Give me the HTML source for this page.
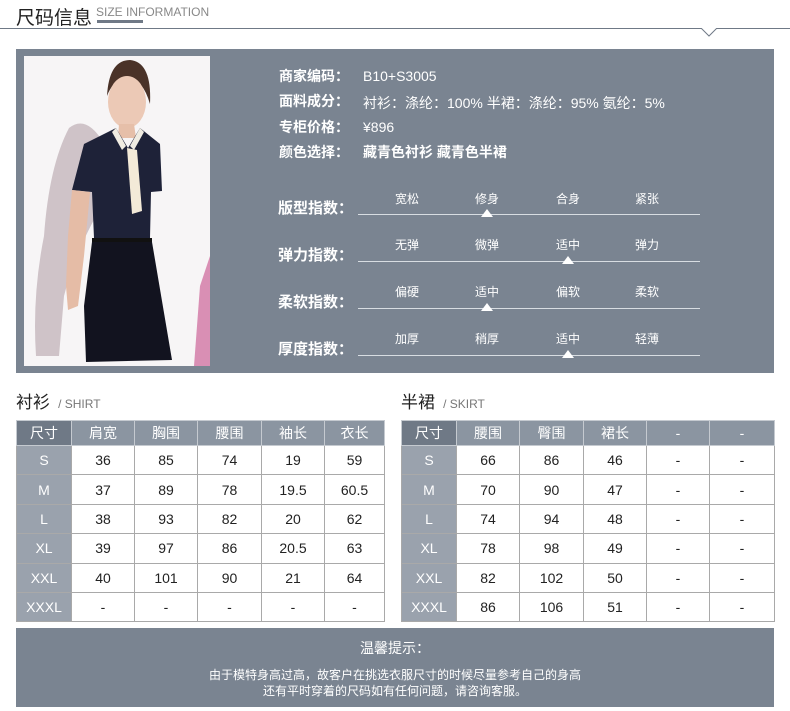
<!DOCTYPE html>
<html><head><meta charset="utf-8"><style>
*{margin:0;padding:0;box-sizing:border-box}
body{width:790px;height:711px;background:#fff;position:relative;overflow:hidden;font-family:"Liberation Sans","Noto Sans CJK SC",sans-serif}
.a{position:absolute;white-space:nowrap}
.panel{position:absolute;left:16px;top:49px;width:758px;height:324px;background:#7a8491}
.info{color:#fff;font-size:14px}
.info b{font-weight:bold}
.info span{position:absolute;left:84px;top:2px}
.lab{color:#fff;font-size:15px;font-weight:bold}
.opt{color:#fff;font-size:12px;width:50px;text-align:center}
.ln{position:absolute;height:1px;background:#d8dde2;left:358px;width:342px}
.tri{position:absolute;width:0;height:0;border-left:6px solid transparent;border-right:6px solid transparent;border-bottom:8px solid #fff}
table{position:absolute;border-collapse:collapse;font-size:14px;table-layout:fixed}
td{border:1px solid #a9a9a9;text-align:center;height:29.4px;color:#222}
tr.h td{background:#8b95a1;color:#fff;height:25px;border-color:#c5cad0}
tr.h td:first-child{background:#6f7986}
td.s{background:#9aa2ad;color:#fff}
</style></head><body>
<div class="a" style="left:16px;top:3px;font-size:19px;color:#222">尺码信息</div>
<div class="a" style="left:96px;top:5px;font-size:12px;color:#888">SIZE INFORMATION</div>
<div class="a" style="left:97px;top:20px;width:46px;height:3px;background:#6f7986"></div>
<div class="a" style="left:0;top:28px;width:790px;height:1px;background:#6f7986"></div>
<svg class="a" style="left:700px;top:28px" width="18" height="10"><path d="M1 0 L9 8 L17 0" stroke="#6f7986" fill="#fff" stroke-width="1"/></svg>

<div class="panel"></div>
<svg class="a" style="left:24px;top:56px" width="186" height="310" viewBox="0 0 186 310">
<rect width="186" height="310" fill="#f7f5f6"/>
<polygon points="176,230 186,200 186,310 170,310" fill="#d98fb4"/>
<path d="M45 72 Q60 60 75 80 L72 160 Q50 200 40 240 L35 300 L12 300 Q8 240 20 180 Q25 110 45 72Z" fill="#cfc3c8"/>
<path d="M83 40 Q85 4 106 4 Q128 6 126 48 Q118 20 100 22 Q88 26 83 40Z" fill="#4a3228"/>
<ellipse cx="103" cy="46" rx="19" ry="26" fill="#ecc9b6"/>
<path d="M95 68 L110 68 L112 82 L94 82Z" fill="#e6bfa9"/>
<path d="M60 88 L92 72 L104 92 L116 72 L136 88 L138 135 L127 136 L126 182 L70 182 L68 136 L48 134Z" fill="#1e2238"/>
<path d="M92 72 L102 90 L98 94 L88 76Z M116 72 L106 90 L110 94 L120 76Z" fill="#f0ece2"/>
<path d="M103 92 L113 94 L118 155 L108 158Z" fill="#f3ead8"/>
<path d="M48 134 L66 136 L60 200 L54 250 L44 254 L42 230 L44 180Z" fill="#e5bca6"/>
<rect x="68" y="182" width="60" height="4" fill="#111"/>
<path d="M68 186 L128 186 L148 304 L62 306 L60 250Z" fill="#12131f"/>
</svg>

<div class="a info" style="left:279px;top:66px;width:400px"><b>商家编码：</b><span>B10+S3005</span></div>
<div class="a info" style="left:279px;top:91px;width:400px"><b>面料成分：</b><span>衬衫：涤纶：100% 半裙：涤纶：95% 氨纶：5%</span></div>
<div class="a info" style="left:279px;top:117px;width:400px"><b>专柜价格：</b><span>¥896</span></div>
<div class="a info" style="left:279px;top:142px;width:400px"><b>颜色选择：</b><span style="top:0"><b>藏青色衬衫 藏青色半裙</b></span></div>

<div class="a lab" style="left:278px;top:197px">版型指数：</div>
<div class="a opt" style="left:382px;top:190px">宽松</div><div class="a opt" style="left:462px;top:190px">修身</div><div class="a opt" style="left:543px;top:190px">合身</div><div class="a opt" style="left:622px;top:190px">紧张</div>
<div class="ln" style="top:214px"></div><div class="tri" style="left:481px;top:209px"></div>

<div class="a lab" style="left:278px;top:244px">弹力指数：</div>
<div class="a opt" style="left:382px;top:236px">无弹</div><div class="a opt" style="left:462px;top:236px">微弹</div><div class="a opt" style="left:543px;top:236px">适中</div><div class="a opt" style="left:622px;top:236px">弹力</div>
<div class="ln" style="top:261px"></div><div class="tri" style="left:562px;top:256px"></div>

<div class="a lab" style="left:278px;top:291px">柔软指数：</div>
<div class="a opt" style="left:382px;top:283px">偏硬</div><div class="a opt" style="left:462px;top:283px">适中</div><div class="a opt" style="left:543px;top:283px">偏软</div><div class="a opt" style="left:622px;top:283px">柔软</div>
<div class="ln" style="top:308px"></div><div class="tri" style="left:481px;top:303px"></div>

<div class="a lab" style="left:278px;top:338px">厚度指数：</div>
<div class="a opt" style="left:382px;top:330px">加厚</div><div class="a opt" style="left:462px;top:330px">稍厚</div><div class="a opt" style="left:543px;top:330px">适中</div><div class="a opt" style="left:622px;top:330px">轻薄</div>
<div class="ln" style="top:355px"></div><div class="tri" style="left:562px;top:350px"></div>

<div class="a" style="left:16px;top:388px;font-size:17px;color:#222">衬衫 <span style="font-size:12px;color:#777">&nbsp;/ SHIRT</span></div>
<div class="a" style="left:401px;top:388px;font-size:17px;color:#222">半裙 <span style="font-size:12px;color:#777">&nbsp;/ SKIRT</span></div>

<table style="left:16px;top:420px;width:368px">
<colgroup><col style="width:55px"><col style="width:63px"><col style="width:63px"><col style="width:64px"><col style="width:63px"><col style="width:60px"></colgroup>
<tr class="h"><td>尺寸</td><td>肩宽</td><td>胸围</td><td>腰围</td><td>袖长</td><td>衣长</td></tr>
<tr><td class="s">S</td><td>36</td><td>85</td><td>74</td><td>19</td><td>59</td></tr>
<tr><td class="s">M</td><td>37</td><td>89</td><td>78</td><td>19.5</td><td>60.5</td></tr>
<tr><td class="s">L</td><td>38</td><td>93</td><td>82</td><td>20</td><td>62</td></tr>
<tr><td class="s">XL</td><td>39</td><td>97</td><td>86</td><td>20.5</td><td>63</td></tr>
<tr><td class="s">XXL</td><td>40</td><td>101</td><td>90</td><td>21</td><td>64</td></tr>
<tr><td class="s">XXXL</td><td>-</td><td>-</td><td>-</td><td>-</td><td>-</td></tr>
</table>

<table style="left:401px;top:420px;width:373px">
<colgroup><col style="width:55px"><col style="width:63px"><col style="width:64px"><col style="width:63px"><col style="width:63px"><col style="width:65px"></colgroup>
<tr class="h"><td>尺寸</td><td>腰围</td><td>臀围</td><td>裙长</td><td>-</td><td>-</td></tr>
<tr><td class="s">S</td><td>66</td><td>86</td><td>46</td><td>-</td><td>-</td></tr>
<tr><td class="s">M</td><td>70</td><td>90</td><td>47</td><td>-</td><td>-</td></tr>
<tr><td class="s">L</td><td>74</td><td>94</td><td>48</td><td>-</td><td>-</td></tr>
<tr><td class="s">XL</td><td>78</td><td>98</td><td>49</td><td>-</td><td>-</td></tr>
<tr><td class="s">XXL</td><td>82</td><td>102</td><td>50</td><td>-</td><td>-</td></tr>
<tr><td class="s">XXXL</td><td>86</td><td>106</td><td>51</td><td>-</td><td>-</td></tr>
</table>

<div class="a" style="left:16px;top:628px;width:758px;height:79px;background:#7a8491;color:#fff;text-align:center">
<div style="font-size:14px;margin-top:10px">温馨提示：</div>
<div style="font-size:12px;margin-top:9px;line-height:16px">由于模特身高过高，故客户在挑选衣服尺寸的时候尽量参考自己的身高<br>还有平时穿着的尺码如有任何问题，请咨询客服。</div>
</div>
</body></html>
